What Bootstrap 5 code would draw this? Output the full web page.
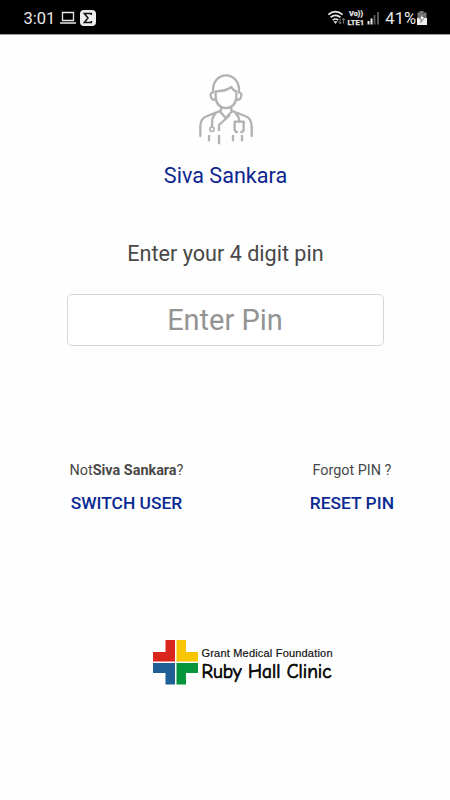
<!DOCTYPE html>
<html lang="en">
<head>
<meta charset="utf-8">
<meta name="viewport" content="width=device-width, initial-scale=1">
<title>Enter Pin</title>
<link href="https://cdn.jsdelivr.net/npm/bootstrap@5.3.0/dist/css/bootstrap.min.css" rel="stylesheet">
<style>
body{font-family:Roboto,"Liberation Sans",sans-serif;height:800px;overflow:hidden;color:#484848;background:#fefefe}
.status{height:35px;background:#000;border-bottom:1px solid #9a9a9a;color:#e8e8e8;padding:4px 22px 0 23.500px;font-size:16.500px;line-height:1}
.doctor{margin-top:30px;height:85px}
.user-name{color:#0d2590;font-size:21.600px;line-height:26px;margin-top:13px;padding-left:1px}
.prompt{font-size:21.600px;line-height:26px;margin-top:52px;padding-left:1px}
.pin{width:317px;height:52px;margin-top:27px;font-size:29px;padding:0;border:1px solid #d6d6d6;border-radius:5px;background:#fff}
.pin::placeholder{color:#949494;opacity:1}
.actions{margin-top:115px;padding:0 56px 0 69.500px;font-size:14.400px;line-height:20px}
.action{color:#0a2a94;font-size:17.400px;line-height:22px;font-weight:500;margin-top:11px}
.clinic{margin-top:122px;margin-left:150px}
</style>
</head>
<body class="d-flex flex-column">
<header class="status d-flex align-items-center justify-content-between flex-shrink-0">
  <div class="d-flex align-items-center">
    <span>3:01</span>
    <svg class="ms-1" width="40" height="20" viewBox="59 9 40 20">
      <path d="M62.500 12.500h11v8h-11zM60 23h16" fill="none" stroke="#e8e8e8" stroke-width="1.300"/>
      <rect x="80" y="10" width="16" height="16" rx="4" fill="#eee"/>
      <path d="M91.300 15v-1.500h-7l3.700 4.500-3.700 4.500h7V21" fill="none" stroke="#111" stroke-width="1.500"/>
    </svg>
  </div>
  <div class="d-flex align-items-center">
    <svg width="56" height="20" viewBox="325.500 9 56 20">
      <g fill="none" stroke="#e8e8e8" stroke-width="1.700"><path d="M328.800 14.600q7-6 14.400 0M331 17.400q5-4 10 0M333.300 20q2.700-2 5.400 0"/></g>
      <path d="M334 21.300h4l-2 2.700z" fill="#e8e8e8"/>
      <path d="M340.500 18.500v5m-1.500-1.500l1.500 1.800 1.500-1.800M344 23.500v-5m-1.500 1.500l1.500-1.800 1.500 1.800" fill="none" stroke="#777" stroke-width="1"/>
      <g fill="#e8e8e8" stroke="#e8e8e8" stroke-width=".25" font-family="Roboto,sans-serif" font-weight="700" font-size="7"><text x="349.500" y="16.200" textLength="14" lengthAdjust="spacingAndGlyphs">Vo))</text><text x="348" y="25" textLength="16.500" lengthAdjust="spacingAndGlyphs">LTE1</text></g>
      <path d="M368 21h2v3.500h-2zM371 18.500h2v6h-2z" fill="#e8e8e8"/><path d="M374 15h2v9.500h-2zM377.500 12h2v12.500h-2z" fill="#555"/>
    </svg>
    <span class="ms-1">41%</span>
    <svg width="12" height="16" viewBox="416 11 12 16">
      <path d="M419.500 11h4v1.500h3V18h-9v-5.500h2z" fill="#777"/><path d="M417 18h10v7h-10z" fill="#eee"/>
      <path d="M423 13l-3.500 6h2l-.7 3.500 4-5.500h-2z" fill="#fff" stroke="#222" stroke-width=".5"/>
    </svg>
  </div>
</header>
<main class="d-flex flex-column align-items-center">
  <svg class="doctor" width="70" height="85" viewBox="0 0 210 255" fill="none" stroke="#b2b2b0" stroke-width="7" stroke-linecap="round" stroke-linejoin="round">
    <path d="M69 82C65 14 151 14 147 82M69 82Q59 84 63 96Q66 106 75 104M147 82Q157 84 153 96Q150 106 141 104"/>
    <path d="M77 79V97C79 140 137 140 139 97V79Q129 76 124 66Q108 79 77 79"/>
    <path d="M93 128V137L52 153Q31 159 31 185V213M124 128V137L165 153Q185 159 185 185V213"/>
    <path d="M89 138L107 159L127 138M120 150L87 180V198M87 210V238M57 210V229M129 210V229M156 210V229" stroke-linecap="butt"/>
    <path d="M76 147Q65 154 66 184M138 147Q147 154 148 168M141 201Q134 200 134 193V170H161V193Q161 200 154 201"/>
    <circle cx="66" cy="193" r="6.500" stroke-width="5"/>
  </svg>
  <div class="user-name">Siva Sankara</div>
  <div class="prompt">Enter your 4 digit pin</div>
  <input class="pin form-control text-center" type="text" placeholder="Enter Pin" aria-label="Enter Pin">
  <div class="actions w-100 d-flex justify-content-between text-center">
    <div><div class="hint">Not<b>Siva Sankara</b>?</div><div class="action">SWITCH USER</div></div>
    <div><div class="hint">Forgot PIN ?</div><div class="action">RESET PIN</div></div>
  </div>
  <svg class="clinic align-self-start" width="186" height="52" viewBox="150 636 186 52">
    <path d="M165.500 640H175v21.500h-22V652h12.500z" fill="#d9261c"/>
    <path d="M176.500 640H186v12h12v9.500h-21.500z" fill="#f9c400"/>
    <path d="M153 663h22v21.500h-9.500V673H153z" fill="#1e5f96"/>
    <path d="M176.500 663H198v10h-12v11.500h-9.500z" fill="#05963c"/>
    <text x="201.500" y="656.500" font-family="Liberation Sans,Arial,sans-serif" font-size="11" fill="#111" stroke="#111" stroke-width=".2" textLength="131">Grant Medical Foundation</text>
    <text x="201.500" y="677.500" font-family="'Comic Sans MS','Comic Neue',Lato,sans-serif" font-size="19.500" fill="#000" stroke="#000" stroke-width=".7" textLength="130" lengthAdjust="spacingAndGlyphs">Ruby Hall Clinic</text>
  </svg>
</main>
<script src="https://cdn.jsdelivr.net/npm/bootstrap@5.3.0/dist/js/bootstrap.bundle.min.js"></script>
</body>
</html>
